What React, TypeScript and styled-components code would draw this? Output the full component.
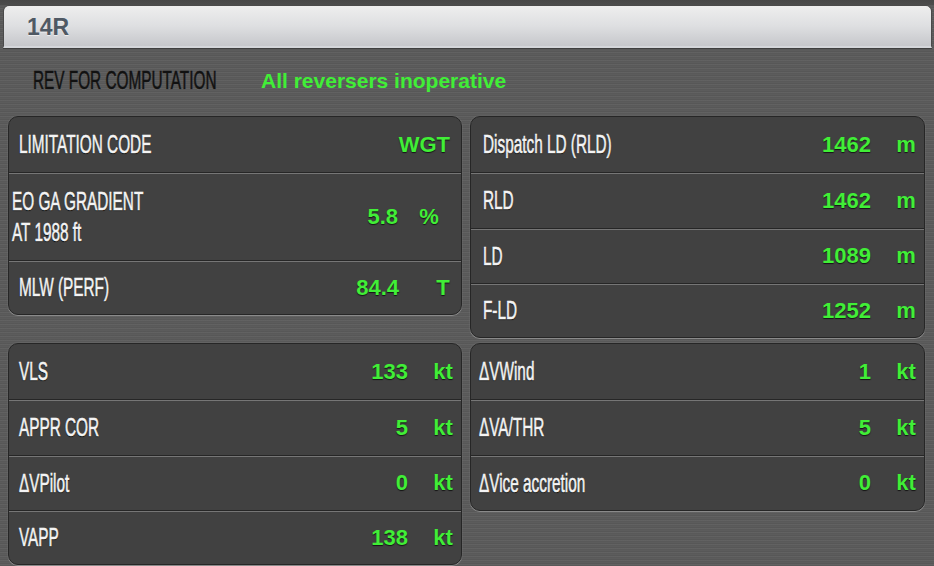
import {FC} from "react";
import styled, {createGlobalStyle} from "styled-components";

const GlobalStyle = createGlobalStyle`
  html, body {
    margin: 0;
    padding: 0;
    background: #5a5a5a;
  }
  body {
    width: 934px;
    height: 566px;
    overflow: hidden;
    font-family: "Liberation Sans", Arial, sans-serif;
  }
`

const Page = styled.div`
  width: 934px;
  height: 566px;
  box-sizing: border-box;
  padding: 5px 2px 0 3px;
  background-color: #5c5c5c;
  background-image:
    linear-gradient(180deg, #474747 0, #4c4c4c 5px, transparent 5px),
    repeating-linear-gradient(180deg,
      rgba(255, 255, 255, 0.035) 0 1px,
      rgba(0, 0, 0, 0.03) 1px 2px,
      transparent 2px 3px,
      rgba(0, 0, 0, 0.05) 3px 4px);
  overflow: hidden;
`

const Header = styled.header`
  height: 43px;
  box-sizing: border-box;
  display: flex;
  align-items: center;
  padding: 2px 0 0 23px;
  border: 1px solid #4a4a4a;
  border-bottom: 2px solid #d4d6da;
  border-radius: 6px 6px 0 0;
  background: linear-gradient(180deg, #eeeeee 0%, #dedfe1 50%, #c6c7cb 100%);
  box-shadow: 0 1px 0 #3f3f3f;
`

const Title = styled.h1`
  margin: 0;
  font: bold 23px "Liberation Sans", Arial, sans-serif;
  color: #4f5964;
  text-shadow: 0 1px 0 rgba(255, 255, 255, 0.6);
`

const Content = styled.div`
  padding: 0 6px 0 5px;
`

const RevLine = styled.div`
  height: 65px;
  display: flex;
  align-items: center;
  padding-left: 25px;
`

// condensed caption face: Arial metrics squeezed to the width of the original narrow font
const Condensed = styled.span`
  display: inline-block;
  white-space: nowrap;
  font-family: "Liberation Sans", Arial, sans-serif;
  font-size: 26px;
  -webkit-text-stroke: 0.6px currentColor;
  transform: scaleX(0.59);
  transform-origin: left center;
`

const RevLabel = styled(Condensed)`
  width: 228px;
  color: #111111;
  text-shadow: 0 1px 0 rgba(255, 255, 255, 0.12);
`

const RevValue = styled.span`
  font: bold 21px "Liberation Sans", Arial, sans-serif;
  color: #41ee37;
`

const Grid = styled.div`
  margin-top: 3px;
  display: grid;
  grid-template-columns: 454px 455px;
  column-gap: 8px;
  row-gap: 5px;
  align-items: start;
`

const Panel = styled.section`
  background: #414141;
  border: 1px solid #262626;
  border-radius: 10px;
  box-shadow: 0 1px 0 #8a8a8a, 0 0 0 1px rgba(120, 120, 120, 0.25);
  overflow: hidden;
`

const Row = styled.div<{ $height?: number }>`
  height: ${p => p.$height ?? 55}px;
  box-sizing: border-box;
  display: flex;
  align-items: center;
  padding: 0 0 0 10px;
  & + & {
    border-top: 1px solid #262626;
    box-shadow: inset 0 1px 0 #767676;
  }
`

const Label = styled(Condensed)<{ $indent?: number }>`
  flex: 1;
  color: #f4f4f4;
  line-height: 31px;
  margin-left: ${p => p.$indent ?? 0}px;
  text-shadow: 0 1px 1px #000;
`

const Value = styled.span<{ $gap?: number }>`
  font: bold 22px "Liberation Sans", Arial, sans-serif;
  color: #41ee37;
  text-shadow: 0 1px 1px rgba(0, 0, 0, 0.7);
  margin-right: ${p => p.$gap ?? 17}px;
  text-align: right;
`

const Unit = styled.span<{ $shift?: number }>`
  width: 36px;
  margin-right: ${p => p.$shift ?? 0}px;
  text-align: center;
  font: bold 22px "Liberation Sans", Arial, sans-serif;
  color: #41ee37;
  text-shadow: 0 1px 1px rgba(0, 0, 0, 0.7);
`

interface RowData {
    label: string[]
    value: string
    unit?: string
    height?: number
    indent?: number
    gap?: number
    shift?: number
}

const limits: RowData[] = [
    {label: ['LIMITATION CODE'], value: 'WGT', gap: 11},
    {label: ['EO GA GRADIENT', 'AT 1988 ft'], value: '5.8', unit: '%', height: 88, indent: -7, gap: 13, shift: 14},
    {label: ['MLW (PERF)'], value: '84.4', unit: 'T', height: 54, gap: 26},
]

const distances: RowData[] = [
    {label: ['Dispatch LD (RLD)'], value: '1462', unit: 'm', indent: 2},
    {label: ['RLD'], value: '1462', unit: 'm', height: 56, indent: 2},
    {label: ['LD'], value: '1089', unit: 'm', indent: 2},
    {label: ['F-LD'], value: '1252', unit: 'm', height: 54, indent: 2},
]

const speeds: RowData[] = [
    {label: ['VLS'], value: '133', unit: 'kt'},
    {label: ['APPR COR'], value: '5', unit: 'kt', height: 56},
    {label: ['\u0394VPilot'], value: '0', unit: 'kt'},
    {label: ['VAPP'], value: '138', unit: 'kt', height: 54},
]

const corrections: RowData[] = [
    {label: ['\u0394VWind'], value: '1', unit: 'kt', indent: -2},
    {label: ['\u0394VA/THR'], value: '5', unit: 'kt', height: 56, indent: -2},
    {label: ['\u0394Vice accretion'], value: '0', unit: 'kt', indent: -2},
]

const DataPanel: FC<{ rows: RowData[] }> = ({rows}) => (
    <Panel>
        {rows.map(r => (
            <Row key={r.label.join()} $height={r.height}>
                <Label $indent={r.indent}>
                    {r.label.map((l, i) => <div key={i}>{l}</div>)}
                </Label>
                <Value $gap={r.gap}>{r.value}</Value>
                {r.unit && <Unit $shift={r.shift}>{r.unit}</Unit>}
            </Row>
        ))}
    </Panel>
)

const App: FC = () => {
    return (
        <Page>
            <GlobalStyle/>
            <Header>
                <Title>14R</Title>
            </Header>
            <Content>
                <RevLine>
                    <RevLabel>REV FOR COMPUTATION</RevLabel>
                    <RevValue>All reversers inoperative</RevValue>
                </RevLine>
                <Grid>
                    <DataPanel rows={limits}/>
                    <DataPanel rows={distances}/>
                    <DataPanel rows={speeds}/>
                    <DataPanel rows={corrections}/>
                </Grid>
            </Content>
        </Page>
    )
};

export default App
